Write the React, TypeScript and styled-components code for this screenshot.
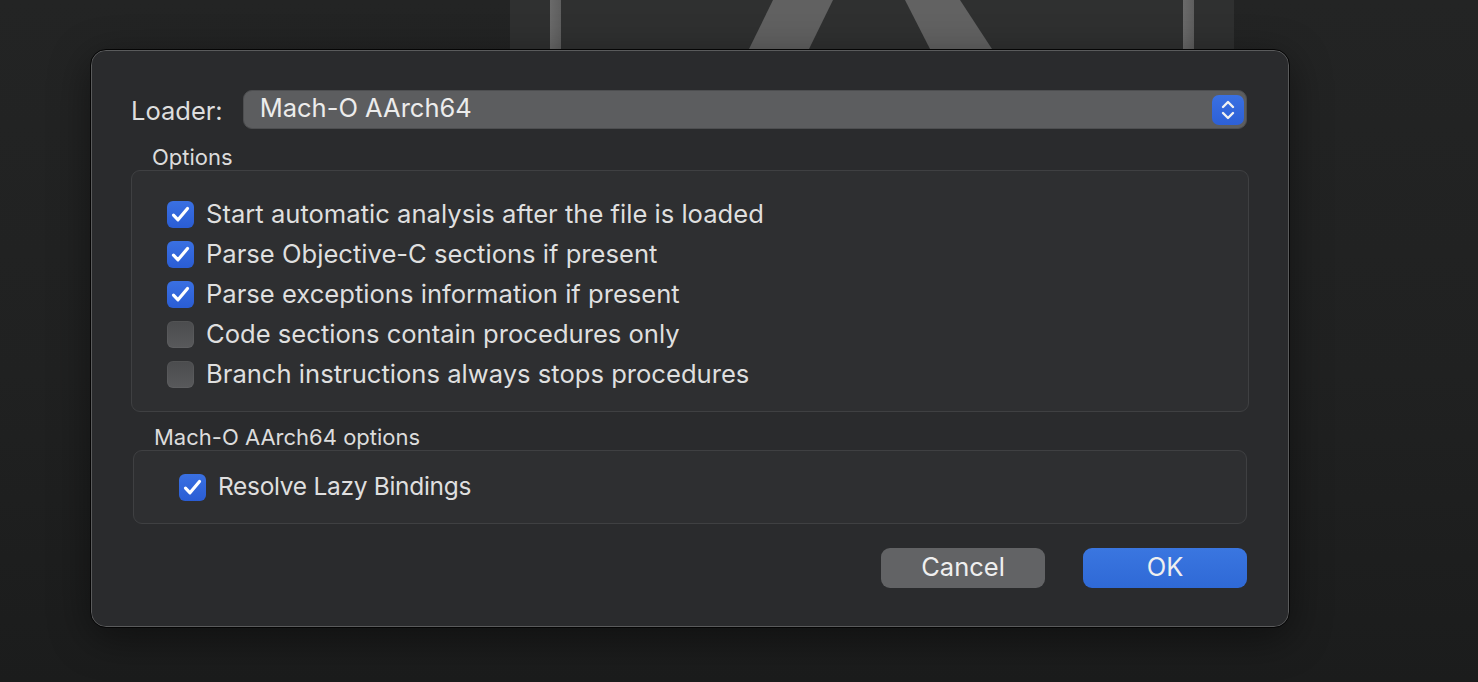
import React from "react";
import styled, { createGlobalStyle } from "styled-components";

const Global = createGlobalStyle`
  html, body { margin: 0; padding: 0; }
  body {
    width: 1478px;
    height: 682px;
    overflow: hidden;
    background: #1c1c1c;
    font-family: Inter, "Noto Sans", "Liberation Sans", sans-serif;
    -webkit-font-smoothing: antialiased;
  }
`;

const Screen = styled.div`
  position: relative;
  width: 1478px;
  height: 682px;
  overflow: hidden;
  background: linear-gradient(180deg, #232424 0%, #202121 55%, #1b1c1c 100%);
  display: flex;
  justify-content: flex-start;
  padding-left: 510px;
  box-sizing: border-box;
`;

const HostWindow = styled.div`
  width: 724px;
  display: flex;
  flex-direction: column;
`;

const Sheet = styled.div`
  position: absolute;
  left: 90px;
  top: 49px;
  width: 1200px;
  height: 579px;
  box-sizing: border-box;
  background: #2a2b2d;
  border: 1px solid #050505;
  border-radius: 16px;
  box-shadow: inset 0 0 0 1px #5a5b5c, 0 10px 40px rgba(0, 0, 0, 0.45);
  padding: 40px 40px 0 40px;
  display: flex;
  flex-direction: column;
  color: #dedede;
`;

const LoaderRow = styled.div`
  display: flex;
  align-items: center;
  height: 39px;
  gap: 20px;
  padding-right: 2px;
`;

const LoaderLabel = styled.span`
  font-size: 25.5px;
  line-height: 1;
  margin-top: 3px;
  color: #dedede;
`;

const Popup = styled.div`
  flex: 1;
  height: 39px;
  box-sizing: border-box;
  border-radius: 9px;
  background: #5c5d5f;
  border: 1px solid #4d4e50;
  display: flex;
  align-items: center;
  justify-content: space-between;
  padding: 0 2px 0 16px;
`;

const PopupText = styled.span`
  font-size: 25.5px;
  line-height: 1;
  color: #ececec;
  margin-top: -4px;
`;

const Stepper = styled.div`
  width: 32px;
  height: 30px;
  border-radius: 7px;
  background: linear-gradient(180deg, #3a70e2 0%, #2d60d6 100%);
  display: flex;
  align-items: center;
  justify-content: center;
`;

const GroupLabel = styled.div<{ $indent: number; $top: number }>`
  font-size: 22px;
  line-height: 26px;
  height: 26px;
  margin-top: ${(p) => p.$top}px;
  padding-left: ${(p) => p.$indent}px;
  color: #dcdcdc;
`;

const GroupBox = styled.div<{ $inset: number; $pt: number; $pb: number; $pl: number }>`
  margin: 0 ${(p) => p.$inset}px;
  box-sizing: border-box;
  border: 1px solid #3f4042;
  border-radius: 9px;
  background: #2e2f31;
  padding: ${(p) => p.$pt}px 20px ${(p) => p.$pb}px ${(p) => p.$pl}px;
  display: flex;
  flex-direction: column;
`;

const Row = styled.div`
  display: flex;
  align-items: center;
  height: 40px;
  gap: 12px;
`;

const Box = styled.div<{ $on: boolean }>`
  width: 27px;
  height: 27px;
  border-radius: 6px;
  box-sizing: border-box;
  flex: none;
  display: flex;
  align-items: center;
  justify-content: center;
  background: ${(p) =>
    p.$on
      ? "linear-gradient(180deg, #3a70e2 0%, #2a5dd4 100%)"
      : "linear-gradient(180deg, #4b4c4e 0%, #58595b 100%)"};
  box-shadow: ${(p) => (p.$on ? "none" : "inset 0 0 0 1px rgba(255,255,255,0.04)")};
`;

const RowText = styled.span<{ $compact?: boolean }>`
  font-size: ${(p) => (p.$compact ? "24.5px" : "25.6px")};
  letter-spacing: ${(p) => (p.$compact ? "-0.3px" : "0")};
  line-height: 1;
  color: #dfdfdf;
  margin-top: -1px;
`;

const Buttons = styled.div`
  display: flex;
  justify-content: flex-end;
  gap: 38px;
  margin-top: 24px;
  padding-right: 2px;
`;

const Button = styled.div<{ $primary?: boolean }>`
  width: 164px;
  height: 40px;
  border-radius: 9px;
  display: flex;
  align-items: center;
  justify-content: center;
  font-size: 25.5px;
  line-height: 1;
  color: #efefef;
  background: ${(p) =>
    p.$primary ? "linear-gradient(180deg, #3a76e0 0%, #2f69d6 100%)" : "#626365"};
`;

const ButtonLabel = styled.span`
  margin-top: -2px;
`;

const Check = () => (
  <svg width="21" height="19" viewBox="0 0 21 19" fill="none">
    <path
      d="M3.5 10.2 L8 14.8 L17.5 3.5"
      stroke="#ffffff"
      strokeWidth="3.2"
      strokeLinecap="round"
      strokeLinejoin="round"
    />
  </svg>
);

const Chevrons = () => (
  <svg width="16" height="22" viewBox="0 0 16 22" fill="none">
    <path d="M3 8 L8 3 L13 8" stroke="#f2f2f2" strokeWidth="2.4" strokeLinecap="round" strokeLinejoin="round" />
    <path d="M3 14 L8 19 L13 14" stroke="#f2f2f2" strokeWidth="2.4" strokeLinecap="round" strokeLinejoin="round" />
  </svg>
);

const HostArt = () => (
  <svg width="724" height="560" viewBox="0 0 724 560">
    <defs>
      <linearGradient id="bar" x1="0" x2="1" y1="0" y2="0">
        <stop offset="0" stopColor="#6a6a6a" />
        <stop offset="1" stopColor="#5e5e5e" />
      </linearGradient>
    </defs>
    <rect x="0" y="0" width="724" height="560" fill="#2f3030" />
    <rect x="40" y="0" width="11" height="560" fill="url(#bar)" />
    <rect x="673" y="0" width="11" height="560" fill="url(#bar)" />
    <polygon points="263,0 323,0 299,49 239,49" fill="#616161" />
    <polygon points="395,0 450,0 482,49 420,49" fill="#626262" />
  </svg>
);

type Opt = { label: string; on: boolean; compact?: boolean };

const options: Opt[] = [
  { label: "Start automatic analysis after the file is loaded", on: true },
  { label: "Parse Objective-C sections if present", on: true },
  { label: "Parse exceptions information if present", on: true },
  { label: "Code sections contain procedures only", on: false },
  { label: "Branch instructions always stops procedures", on: false },
];

const OptionRow = ({ label, on, compact }: Opt) => (
  <Row>
    <Box $on={on}>{on && <Check />}</Box>
    <RowText $compact={compact}>{label}</RowText>
  </Row>
);

export default function App() {
  return (
    <>
      <Global />
      <Screen>
        <HostWindow>
          <HostArt />
        </HostWindow>
        <Sheet>
          <LoaderRow>
            <LoaderLabel>Loader:</LoaderLabel>
            <Popup>
              <PopupText>Mach-O AArch64</PopupText>
              <Stepper>
                <Chevrons />
              </Stepper>
            </Popup>
          </LoaderRow>
          <GroupLabel $indent={21} $top={15}>
            Options
          </GroupLabel>
          <GroupBox $inset={0} $pt={23} $pb={17} $pl={35}>
            {options.map((o) => (
              <OptionRow key={o.label} {...o} />
            ))}
          </GroupBox>
          <GroupLabel $indent={23} $top={12}>
            Mach-O AArch64 options
          </GroupLabel>
          <GroupBox $inset={2} $pt={16} $pb={16} $pl={45}>
            <OptionRow label="Resolve Lazy Bindings" on={true} compact />
          </GroupBox>
          <Buttons>
            <Button>
              <ButtonLabel>Cancel</ButtonLabel>
            </Button>
            <Button $primary>
              <ButtonLabel>OK</ButtonLabel>
            </Button>
          </Buttons>
        </Sheet>
      </Screen>
    </>
  );
}
